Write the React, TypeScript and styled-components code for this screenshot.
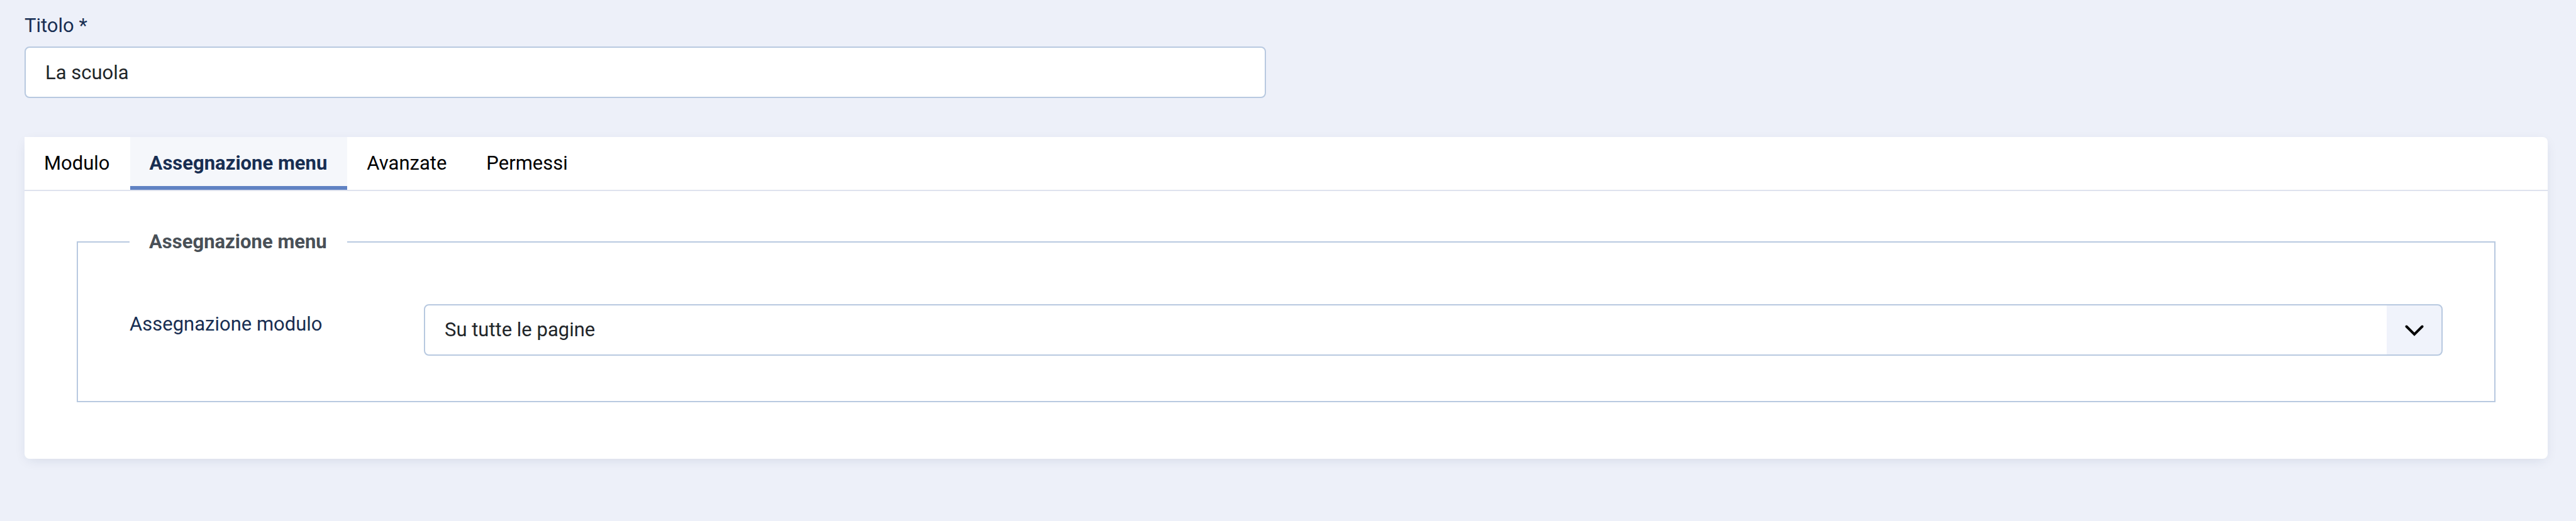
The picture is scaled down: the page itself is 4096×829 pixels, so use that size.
import React from "react";
import styled, { createGlobalStyle, css } from "styled-components";

const GlobalStyle = createGlobalStyle`
  *, *::before, *::after { box-sizing: border-box; }
  body {
    margin: 0;
    background: #edf0f9;
    color: #212529;
    font: 400 31px/46px Roboto, sans-serif;
  }
`;

const Page = styled.main`
  padding: 18px 45px 98px 39px;
`;

const TitleRow = styled.div`
  display: grid;
  grid-template-columns: 1fr 1fr;
  column-gap: 64px;
  margin-bottom: 62px;
`;

const TitleField = styled.div`
  display: flex;
  flex-direction: column;
  gap: 10px;
`;

const Label = styled.label`
  color: #182e52;
`;

const controlStyle = css`
  display: block;
  width: 100%;
  height: 82px;
  margin: 0;
  padding: 0 31px;
  border: 2px solid #b8c9e0;
  border-radius: 8px;
  background-color: #fff;
  color: #212529;
  font: inherit;
  outline: none;
`;

const TextInput = styled.input`
  ${controlStyle}
`;

const Card = styled.section`
  background: #fff;
  border-radius: 0 8px 8px 8px;
  box-shadow: 0 5px 20px -5px rgba(24, 46, 82, 0.13);
`;

const TabList = styled.div`
  display: flex;
  border-bottom: 2px solid #dee2ee;
`;

const Tab = styled.button<{ $active?: boolean }>`
  height: 84px;
  padding: 0 32px 0 31px;
  border: 0;
  background: ${(p) => (p.$active ? "#f5f7fb" : "#fff")};
  box-shadow: ${(p) => (p.$active ? "inset 0 -6px 0 #6082c3" : "none")};
  color: ${(p) => (p.$active ? "#182e52" : "#000")};
  font: inherit;
  font-weight: ${(p) => (p.$active ? 700 : 400)};
  cursor: pointer;
`;

const Panel = styled.div`
  padding: 58px 83px 90px;
`;

const Fieldset = styled.fieldset`
  min-width: 0;
  margin: 0;
  padding: 76px 82px 72px;
  border: 2px solid #b8c9e0;
`;

const Legend = styled.legend`
  padding: 0 32px 0 31px;
  color: #495057;
  font-weight: 700;
`;

const FieldRow = styled.div`
  display: flex;
  align-items: flex-start;
`;

const FieldLabel = styled(Label)`
  flex: 0 0 468px;
  padding-top: 9px;
`;

const SelectWrap = styled.div`
  position: relative;
  flex: 1;
`;

const Select = styled.select`
  ${controlStyle}
  appearance: none;
  background-image: linear-gradient(#f0f3fb, #f0f3fb);
  background-position: right center;
  background-repeat: no-repeat;
  background-size: 87px 100%;
`;

const Chevron = styled.svg`
  position: absolute;
  top: 33px;
  right: 30px;
  width: 30px;
  height: 18px;
  pointer-events: none;
`;

const tabs = ["Modulo", "Assegnazione menu", "Avanzate", "Permessi"];
const activeTab = "Assegnazione menu";

export default function App() {
  return (
    <>
      <GlobalStyle />
      <Page>
        <TitleRow>
          <TitleField>
            <Label htmlFor="title">Titolo *</Label>
            <TextInput id="title" type="text" defaultValue="La scuola" required />
          </TitleField>
        </TitleRow>
        <Card>
          <TabList role="tablist">
            {tabs.map((name) => (
              <Tab
                key={name}
                type="button"
                role="tab"
                aria-selected={name === activeTab}
                $active={name === activeTab}
              >
                {name}
              </Tab>
            ))}
          </TabList>
          <Panel role="tabpanel" aria-label={activeTab}>
            <Fieldset>
              <Legend>Assegnazione menu</Legend>
              <FieldRow>
                <FieldLabel htmlFor="assignment">Assegnazione modulo</FieldLabel>
                <SelectWrap>
                  <Select id="assignment" defaultValue="all">
                    <option value="all">Su tutte le pagine</option>
                  </Select>
                  <Chevron viewBox="0 0 30 18" aria-hidden="true">
                    <path
                      d="M2.5 2.5 15 15 27.5 2.5"
                      fill="none"
                      stroke="#000"
                      strokeWidth="4"
                      strokeLinecap="round"
                    />
                  </Chevron>
                </SelectWrap>
              </FieldRow>
            </Fieldset>
          </Panel>
        </Card>
      </Page>
    </>
  );
}
